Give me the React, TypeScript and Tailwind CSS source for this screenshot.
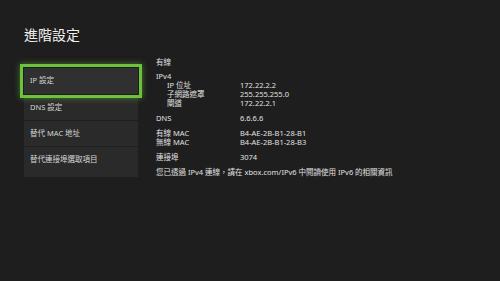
const menu = ["IP 設定", "DNS 設定", "替代 MAC 地址", "替代連接埠選取項目"];

const Row = ({ label, value, indent }: { label: string; value?: string; indent?: boolean }) => (
  <div className="flex h-[9px] items-center leading-[9px]">
    <span className={indent ? "w-[84px] pl-[11px]" : "w-[84px]"}>{label}</span>
    {value && <span>{value}</span>}
  </div>
);

export default function App() {
  return (
    <div
      className="w-[500px] h-[281px] bg-[#1e1e1e] text-[#e6e6e6] px-[24px] overflow-hidden"
      style={{ fontFamily: '"Noto Sans", "Noto Sans CJK TC", sans-serif' }}
    >
      <h1 className="pt-[26px] text-[14px] leading-[18px] text-[#f0f0f0]">進階設定</h1>

      <div className="flex mt-[13px]">
        <div className="w-[114px] mt-[11px] bg-[#2a2a2a] flex flex-col">
          {menu.map((item, i) => (
            <div
              key={item}
              className={
                "relative flex items-center px-[6px] text-[7.5px] text-[#d6d6d6] " +
                (i === 0 ? "h-[26px] bg-[#303030]" : "h-[26px] border-t border-[#1f1f1f]")
              }
            >
              {item}
              {i === 0 && (
                <div className="absolute -inset-[4px] border-[3px] border-[#6cc23a] shadow-[0_0_6px_rgba(108,194,58,0.55)]" />
              )}
            </div>
          ))}
        </div>

        <div className="ml-[18px] pt-[1px] text-[7.5px] leading-[9px] text-[#e0e0e0]">
          <Row label="有線" />
          <div className="mt-[5px]">
            <Row label="IPv4" />
            <Row label="IP 位址" value="172.22.2.2" indent />
            <Row label="子網路遮罩" value="255.255.255.0" indent />
            <Row label="閘道" value="172.22.2.1" indent />
          </div>
          <div className="mt-[6px]">
            <Row label="DNS" value="6.6.6.6" />
          </div>
          <div className="mt-[6px]">
            <Row label="有線 MAC" value="B4-AE-2B-B1-28-B1" />
            <Row label="無線 MAC" value="B4-AE-2B-B1-28-B3" />
          </div>
          <div className="mt-[6px]">
            <Row label="連接埠" value="3074" />
          </div>
          <div className="mt-[6px] h-[9px] whitespace-nowrap">
            您已透過 IPv4 連線，請在 xbox.com/IPv6 中閱讀使用 IPv6 的相關資訊
          </div>
        </div>
      </div>
    </div>
  );
}
